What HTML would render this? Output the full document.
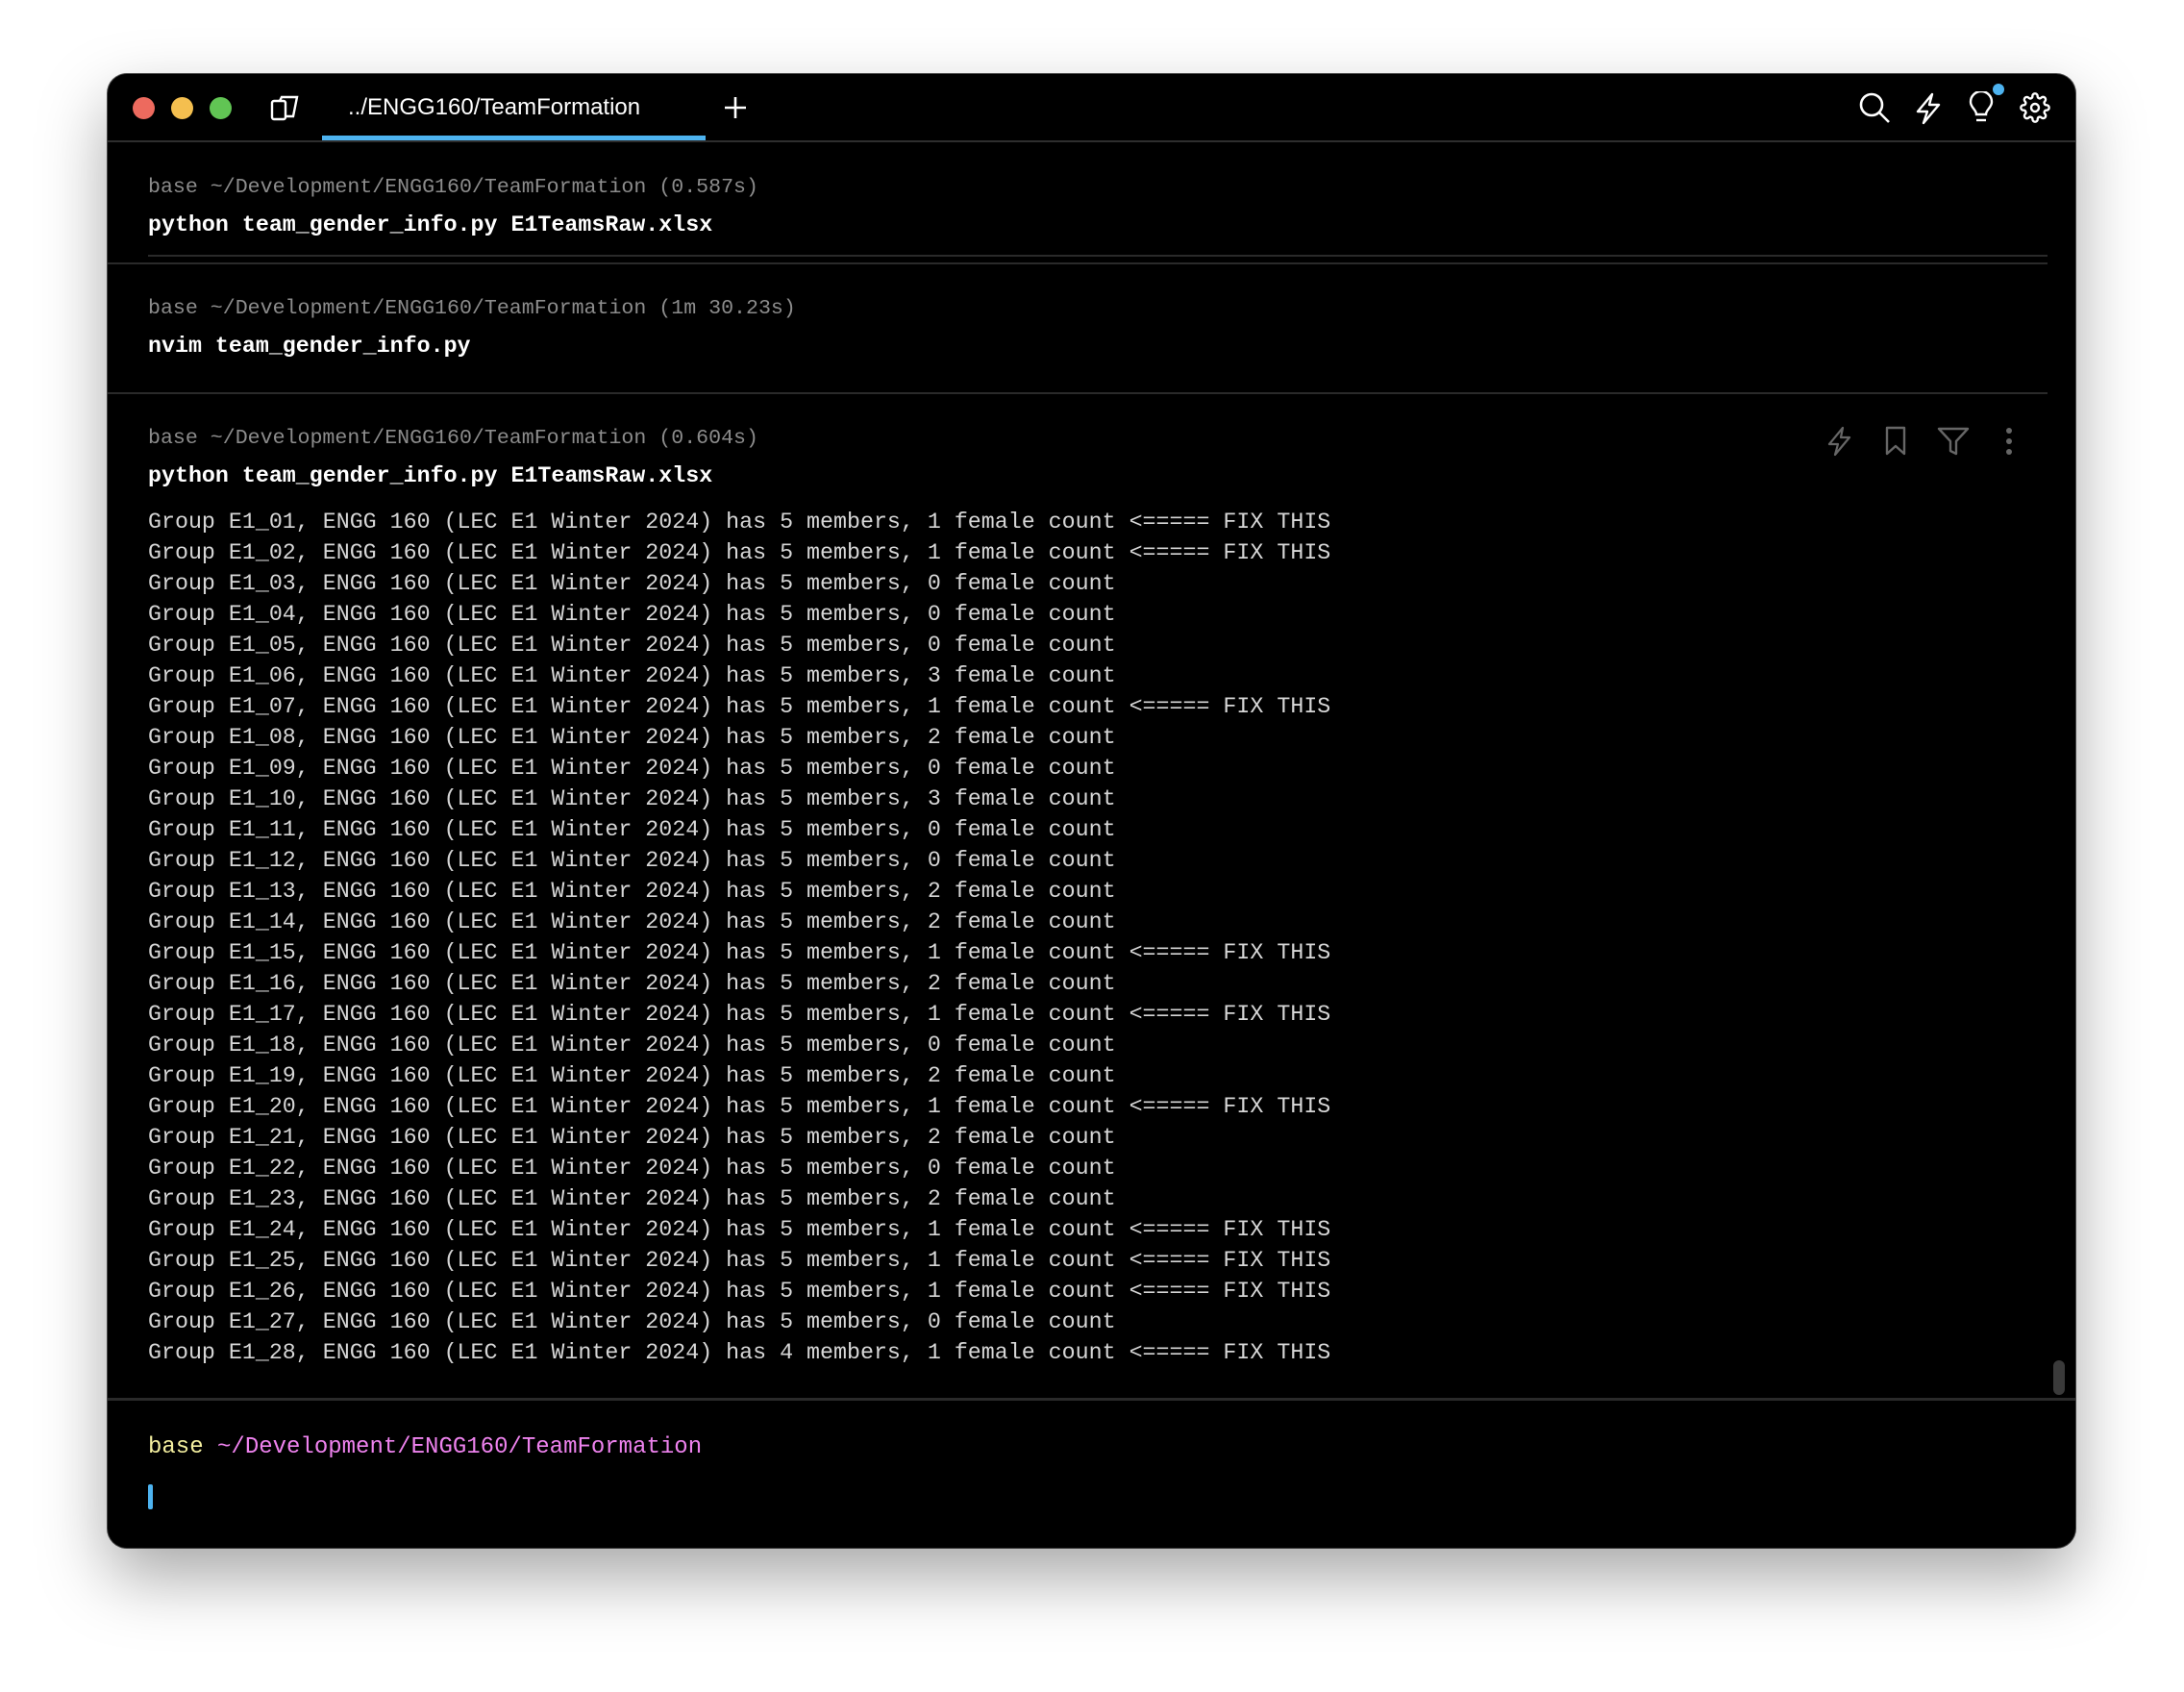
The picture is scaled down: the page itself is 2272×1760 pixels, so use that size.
<!DOCTYPE html>
<html><head><meta charset="utf-8"><style>
html,body{margin:0;padding:0;width:2272px;height:1760px;background:#fff;overflow:hidden}
.win{position:absolute;left:112px;top:77px;width:2047px;height:1533px;background:#000;border-radius:20px;box-shadow:0 30px 70px rgba(0,0,0,.35),0 0 0 1px #555;overflow:hidden}
.tl{position:absolute;top:101px;width:23px;height:23px;border-radius:50%}
.mono{font-family:"Liberation Mono",monospace;font-size:23.3px;white-space:pre;position:absolute;left:154px}
.hdr{color:#8c8c8c;font-size:21.6px}
.cmd{color:#fff;font-weight:bold}
.out{color:#d6d6d6;line-height:32px}
.hl{position:absolute;height:2px;background:#2a2a2a}
svg{position:absolute}
</style></head><body>
<div class="win"></div>
<div class="tl" style="left:138px;background:#ed6a5e"></div>
<div class="tl" style="left:178px;background:#f4bf4f"></div>
<div class="tl" style="left:218px;background:#61c554"></div>
<svg style="left:281px;top:99px" width="32" height="28" viewBox="0 0 32 28" fill="none" stroke="#fff" stroke-width="2.4"><rect x="2" y="6" width="14" height="19" rx="2"/><path d="M10 6 L12 2 H28 L24 22 H16"/></svg>
<div style="position:absolute;left:362px;top:98px;font-family:'Liberation Sans',sans-serif;font-size:24px;color:#fff">../ENGG160/TeamFormation</div>
<div style="position:absolute;left:335px;top:141px;width:399px;height:5px;background:#4db3f0"></div>
<svg style="left:753px;top:100px" width="24" height="24" stroke="#fff" stroke-width="2.6"><path d="M12 1V23M1 12H23"/></svg>
<div class="hl" style="left:112px;top:146px;width:2047px;background:#2e2e2e"></div>
<svg style="left:1933px;top:95px" width="34" height="34" fill="none" stroke="#fff" stroke-width="2.6"><circle cx="14" cy="14" r="11"/><path d="M22 22 L32 32"/></svg>
<svg style="left:1992px;top:96px" width="28" height="34" fill="none" stroke="#fff" stroke-width="2.4" stroke-linejoin="round"><path d="M18 2 L3 20 H13 L9 32 L25 13 H15 Z"/></svg>
<svg style="left:2048px;top:95px" width="26" height="36" fill="none" stroke="#fff" stroke-width="2.4"><path d="M8 24 C8 19 2 17 2 11 A11 11 0 0 1 24 11 C24 17 18 19 18 24 Z"/><path d="M8 30H18"/></svg>
<div style="position:absolute;left:2073px;top:87px;width:12px;height:12px;border-radius:50%;background:#4db3f0"></div>
<svg style="left:2101px;top:96px" width="32" height="32" viewBox="0 0 24 24" fill="none" stroke="#fff" stroke-width="1.8"><circle cx="12" cy="12" r="3"/><path d="M19.4 15a1.65 1.65 0 0 0 .33 1.820l.06.06a2 2 0 1 1-2.830 2.830l-.06-.06a1.65 1.65 0 0 0-1.820-.33 1.65 1.65 0 0 0-1 1.510V21a2 2 0 0 1-4 0v-.09A1.65 1.65 0 0 0 9 19.4a1.65 1.65 0 0 0-1.820.33l-.06.06a2 2 0 1 1-2.830-2.830l.06-.06A1.65 1.65 0 0 0 4.680 15a1.65 1.65 0 0 0-1.510-1H3a2 2 0 0 1 0-4h.09A1.65 1.65 0 0 0 4.6 9a1.65 1.65 0 0 0-.33-1.820l-.06-.06a2 2 0 1 1 2.830-2.830l.06.06A1.65 1.65 0 0 0 9 4.680 1.65 1.65 0 0 0 10 3.170V3a2 2 0 0 1 4 0v.09a1.65 1.65 0 0 0 1 1.510 1.65 1.65 0 0 0 1.820-.33l.06-.06a2 2 0 1 1 2.830 2.830l-.06.06A1.65 1.65 0 0 0 19.4 9a1.65 1.65 0 0 0 1.510 1H21a2 2 0 0 1 0 4h-.09a1.65 1.65 0 0 0-1.510 1z"/></svg>

<div class="mono hdr" style="top:183px">base ~/Development/ENGG160/TeamFormation (0.587s)</div>
<div class="mono cmd" style="top:221px">python team_gender_info.py E1TeamsRaw.xlsx</div>
<div class="hl" style="left:154px;top:265px;width:1976px"></div>
<div class="hl" style="left:112px;top:273px;width:2018px"></div>
<div class="mono hdr" style="top:309px">base ~/Development/ENGG160/TeamFormation (1m 30.23s)</div>
<div class="mono cmd" style="top:347px">nvim team_gender_info.py</div>
<div class="hl" style="left:112px;top:408px;width:2018px"></div>
<div class="mono hdr" style="top:444px">base ~/Development/ENGG160/TeamFormation (0.604s)</div>
<div class="mono cmd" style="top:482px">python team_gender_info.py E1TeamsRaw.xlsx</div>

<svg style="left:1900px;top:443px" width="28" height="32" fill="none" stroke="#666" stroke-width="2.2" stroke-linejoin="round"><path d="M17 2 L3 19 H12 L9 30 L24 12 H15 Z"/></svg>
<svg style="left:1960px;top:443px" width="24" height="32" fill="none" stroke="#666" stroke-width="2.4" stroke-linejoin="round"><path d="M3 2 H21 V29 L12 21 L3 29 Z"/></svg>
<svg style="left:2015px;top:444px" width="34" height="30" fill="none" stroke="#666" stroke-width="2.4" stroke-linejoin="round"><path d="M2 2 H32 L20 15 V28 L14 25 V15 Z"/></svg>
<svg style="left:2084px;top:444px" width="12" height="30" fill="#666"><circle cx="6" cy="4" r="3"/><circle cx="6" cy="15" r="3"/><circle cx="6" cy="26" r="3"/></svg>

<div class="mono out" style="top:527px">Group E1_01, ENGG 160 (LEC E1 Winter 2024) has 5 members, 1 female count &lt;===== FIX THIS
Group E1_02, ENGG 160 (LEC E1 Winter 2024) has 5 members, 1 female count &lt;===== FIX THIS
Group E1_03, ENGG 160 (LEC E1 Winter 2024) has 5 members, 0 female count
Group E1_04, ENGG 160 (LEC E1 Winter 2024) has 5 members, 0 female count
Group E1_05, ENGG 160 (LEC E1 Winter 2024) has 5 members, 0 female count
Group E1_06, ENGG 160 (LEC E1 Winter 2024) has 5 members, 3 female count
Group E1_07, ENGG 160 (LEC E1 Winter 2024) has 5 members, 1 female count &lt;===== FIX THIS
Group E1_08, ENGG 160 (LEC E1 Winter 2024) has 5 members, 2 female count
Group E1_09, ENGG 160 (LEC E1 Winter 2024) has 5 members, 0 female count
Group E1_10, ENGG 160 (LEC E1 Winter 2024) has 5 members, 3 female count
Group E1_11, ENGG 160 (LEC E1 Winter 2024) has 5 members, 0 female count
Group E1_12, ENGG 160 (LEC E1 Winter 2024) has 5 members, 0 female count
Group E1_13, ENGG 160 (LEC E1 Winter 2024) has 5 members, 2 female count
Group E1_14, ENGG 160 (LEC E1 Winter 2024) has 5 members, 2 female count
Group E1_15, ENGG 160 (LEC E1 Winter 2024) has 5 members, 1 female count &lt;===== FIX THIS
Group E1_16, ENGG 160 (LEC E1 Winter 2024) has 5 members, 2 female count
Group E1_17, ENGG 160 (LEC E1 Winter 2024) has 5 members, 1 female count &lt;===== FIX THIS
Group E1_18, ENGG 160 (LEC E1 Winter 2024) has 5 members, 0 female count
Group E1_19, ENGG 160 (LEC E1 Winter 2024) has 5 members, 2 female count
Group E1_20, ENGG 160 (LEC E1 Winter 2024) has 5 members, 1 female count &lt;===== FIX THIS
Group E1_21, ENGG 160 (LEC E1 Winter 2024) has 5 members, 2 female count
Group E1_22, ENGG 160 (LEC E1 Winter 2024) has 5 members, 0 female count
Group E1_23, ENGG 160 (LEC E1 Winter 2024) has 5 members, 2 female count
Group E1_24, ENGG 160 (LEC E1 Winter 2024) has 5 members, 1 female count &lt;===== FIX THIS
Group E1_25, ENGG 160 (LEC E1 Winter 2024) has 5 members, 1 female count &lt;===== FIX THIS
Group E1_26, ENGG 160 (LEC E1 Winter 2024) has 5 members, 1 female count &lt;===== FIX THIS
Group E1_27, ENGG 160 (LEC E1 Winter 2024) has 5 members, 0 female count
Group E1_28, ENGG 160 (LEC E1 Winter 2024) has 4 members, 1 female count &lt;===== FIX THIS</div>

<div style="position:absolute;left:2136px;top:1415px;width:12px;height:36px;border-radius:6px;background:#3a3a3a"></div>
<div class="hl" style="left:112px;top:1454px;width:2047px;height:3px"></div>
<div class="mono" style="top:1492px;font-size:24px"><span style="color:#f5f0a0">base</span> <span style="color:#ee82ee">~/Development/ENGG160/TeamFormation</span></div>
<div style="position:absolute;left:154px;top:1544px;width:5px;height:26px;background:#4db3f0;border-radius:2px"></div>
</body></html>
